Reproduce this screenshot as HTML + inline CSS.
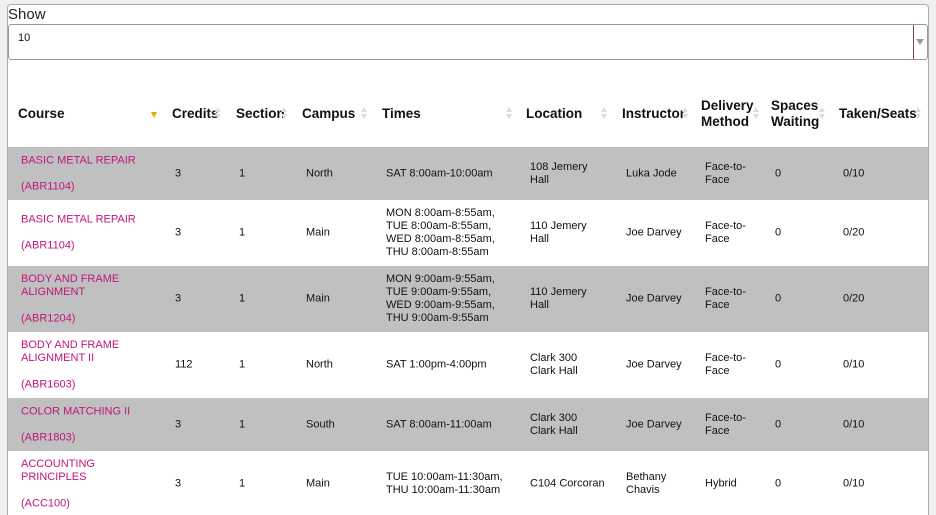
<!DOCTYPE html>
<html><head><style>
*{box-sizing:border-box;margin:0;padding:0}
html,body{width:936px;height:515px;overflow:hidden}
body{background:#f0f0f0;font-family:"Liberation Sans",sans-serif;color:#111;position:relative}
.box{position:absolute;left:7px;top:4px;width:922px;height:530px;background:#fff;border:1px solid #aaa;border-radius:4px}
.show{position:absolute;left:8px;top:6px;font-size:15px;color:#222}
.sel{position:absolute;left:8px;top:24px;width:920px;height:36px;border:1px solid #999;border-radius:3px;background:#fff}
.sel span{position:absolute;left:9px;top:7px;font-size:11px}
.sel i{position:absolute;right:13px;top:0;height:34px;border-left:1px solid #8a4060}
.sel b{position:absolute;right:3px;top:14px;width:0;height:0;border-left:4px solid transparent;border-right:4px solid transparent;border-top:6px solid #999}
.th{position:absolute;top:0;font-weight:bold;font-size:13.5px;line-height:16px}
.ar{position:absolute;width:0;height:0;border-left:3px solid transparent;border-right:3px solid transparent}
.s{position:absolute;width:8px;height:14px}
.s:before{content:"";position:absolute;left:1px;top:0;border-left:3px solid transparent;border-right:3px solid transparent;border-bottom:5px solid #ddd}
.s:after{content:"";position:absolute;left:1px;top:7px;border-left:3px solid transparent;border-right:3px solid transparent;border-top:5px solid #ddd}
.row{position:absolute;left:8px;width:920px}
.g{background:#c0c0c0}
.c{position:absolute;font-size:11px;line-height:13px;transform:translateY(-50%);margin-top:1px}
.p{color:#c0157a}
</style></head><body>
<div class="box"></div>
<div class="show">Show</div>
<div class="sel"><span>10</span><i></i><b></b></div>

<div style="position:absolute;left:0;top:1px;width:936px">
<div class="th" style="left:18px;top:105px">Course</div>
<div class="ar" style="left:151px;top:111px;border-top:6px solid #e0b000"></div>
<div class="th" style="left:172px;top:105px">Credits</div><div class="s" style="left:214px;top:106px"></div>
<div class="th" style="left:236px;top:105px">Section</div><div class="s" style="left:280px;top:106px"></div>
<div class="th" style="left:302px;top:105px">Campus</div><div class="s" style="left:360px;top:106px"></div>
<div class="th" style="left:382px;top:105px">Times</div><div class="s" style="left:505px;top:106px"></div>
<div class="th" style="left:526px;top:105px">Location</div><div class="s" style="left:600px;top:106px"></div>
<div class="th" style="left:622px;top:105px">Instructor</div><div class="s" style="left:681px;top:106px"></div>
<div class="th" style="left:701px;top:97px">Delivery<br>Method</div><div class="s" style="left:752px;top:106px"></div>
<div class="th" style="left:771px;top:97px">Spaces<br>Waiting</div><div class="s" style="left:818px;top:106px"></div>
<div class="th" style="left:839px;top:105px">Taken/Seats</div><div class="s" style="left:914px;top:106px"></div>
</div>

<div class="row g" style="top:147px;height:53px"></div>
<div class="row" style="top:200px;height:66px"></div>
<div class="row g" style="top:266px;height:66px"></div>
<div class="row" style="top:332px;height:66px"></div>
<div class="row g" style="top:398px;height:53px"></div>
<div class="row" style="top:451px;height:64px"></div>

<div class="c p" style="left:21px;top:160px">BASIC METAL REPAIR</div>
<div class="c p" style="left:21px;top:186px">(ABR1104)</div>
<div class="c" style="left:175px;top:173px">3</div><div class="c" style="left:239px;top:173px">1</div>
<div class="c" style="left:306px;top:173px">North</div><div class="c" style="left:386px;top:173px">SAT 8:00am-10:00am</div>
<div class="c" style="left:530px;top:173px">108 Jemery<br>Hall</div><div class="c" style="left:626px;top:173px">Luka Jode</div>
<div class="c" style="left:705px;top:173px">Face-to-<br>Face</div><div class="c" style="left:775px;top:173px">0</div><div class="c" style="left:843px;top:173px">0/10</div>

<div class="c p" style="left:21px;top:219px">BASIC METAL REPAIR</div>
<div class="c p" style="left:21px;top:245px">(ABR1104)</div>
<div class="c" style="left:175px;top:232px">3</div><div class="c" style="left:239px;top:232px">1</div>
<div class="c" style="left:306px;top:232px">Main</div><div class="c" style="left:386px;top:232px">MON 8:00am-8:55am,<br>TUE 8:00am-8:55am,<br>WED 8:00am-8:55am,<br>THU 8:00am-8:55am</div>
<div class="c" style="left:530px;top:232px">110 Jemery<br>Hall</div><div class="c" style="left:626px;top:232px">Joe Darvey</div>
<div class="c" style="left:705px;top:232px">Face-to-<br>Face</div><div class="c" style="left:775px;top:232px">0</div><div class="c" style="left:843px;top:232px">0/20</div>

<div class="c p" style="left:21px;top:285px">BODY AND FRAME<br>ALIGNMENT</div>
<div class="c p" style="left:21px;top:318px">(ABR1204)</div>
<div class="c" style="left:175px;top:298px">3</div><div class="c" style="left:239px;top:298px">1</div>
<div class="c" style="left:306px;top:298px">Main</div><div class="c" style="left:386px;top:298px">MON 9:00am-9:55am,<br>TUE 9:00am-9:55am,<br>WED 9:00am-9:55am,<br>THU 9:00am-9:55am</div>
<div class="c" style="left:530px;top:298px">110 Jemery<br>Hall</div><div class="c" style="left:626px;top:298px">Joe Darvey</div>
<div class="c" style="left:705px;top:298px">Face-to-<br>Face</div><div class="c" style="left:775px;top:298px">0</div><div class="c" style="left:843px;top:298px">0/20</div>

<div class="c p" style="left:21px;top:351px">BODY AND FRAME<br>ALIGNMENT II</div>
<div class="c p" style="left:21px;top:384px">(ABR1603)</div>
<div class="c" style="left:175px;top:364px">112</div><div class="c" style="left:239px;top:364px">1</div>
<div class="c" style="left:306px;top:364px">North</div><div class="c" style="left:386px;top:364px">SAT 1:00pm-4:00pm</div>
<div class="c" style="left:530px;top:364px">Clark 300<br>Clark Hall</div><div class="c" style="left:626px;top:364px">Joe Darvey</div>
<div class="c" style="left:705px;top:364px">Face-to-<br>Face</div><div class="c" style="left:775px;top:364px">0</div><div class="c" style="left:843px;top:364px">0/10</div>

<div class="c p" style="left:21px;top:411px">COLOR MATCHING II</div>
<div class="c p" style="left:21px;top:437px">(ABR1803)</div>
<div class="c" style="left:175px;top:424px">3</div><div class="c" style="left:239px;top:424px">1</div>
<div class="c" style="left:306px;top:424px">South</div><div class="c" style="left:386px;top:424px">SAT 8:00am-11:00am</div>
<div class="c" style="left:530px;top:424px">Clark 300<br>Clark Hall</div><div class="c" style="left:626px;top:424px">Joe Darvey</div>
<div class="c" style="left:705px;top:424px">Face-to-<br>Face</div><div class="c" style="left:775px;top:424px">0</div><div class="c" style="left:843px;top:424px">0/10</div>

<div class="c p" style="left:21px;top:470px">ACCOUNTING<br>PRINCIPLES</div>
<div class="c p" style="left:21px;top:503px">(ACC100)</div>
<div class="c" style="left:175px;top:483px">3</div><div class="c" style="left:239px;top:483px">1</div>
<div class="c" style="left:306px;top:483px">Main</div><div class="c" style="left:386px;top:483px">TUE 10:00am-11:30am,<br>THU 10:00am-11:30am</div>
<div class="c" style="left:530px;top:483px">C104 Corcoran</div><div class="c" style="left:626px;top:483px">Bethany<br>Chavis</div>
<div class="c" style="left:705px;top:483px">Hybrid</div><div class="c" style="left:775px;top:483px">0</div><div class="c" style="left:843px;top:483px">0/10</div>
</body></html>
